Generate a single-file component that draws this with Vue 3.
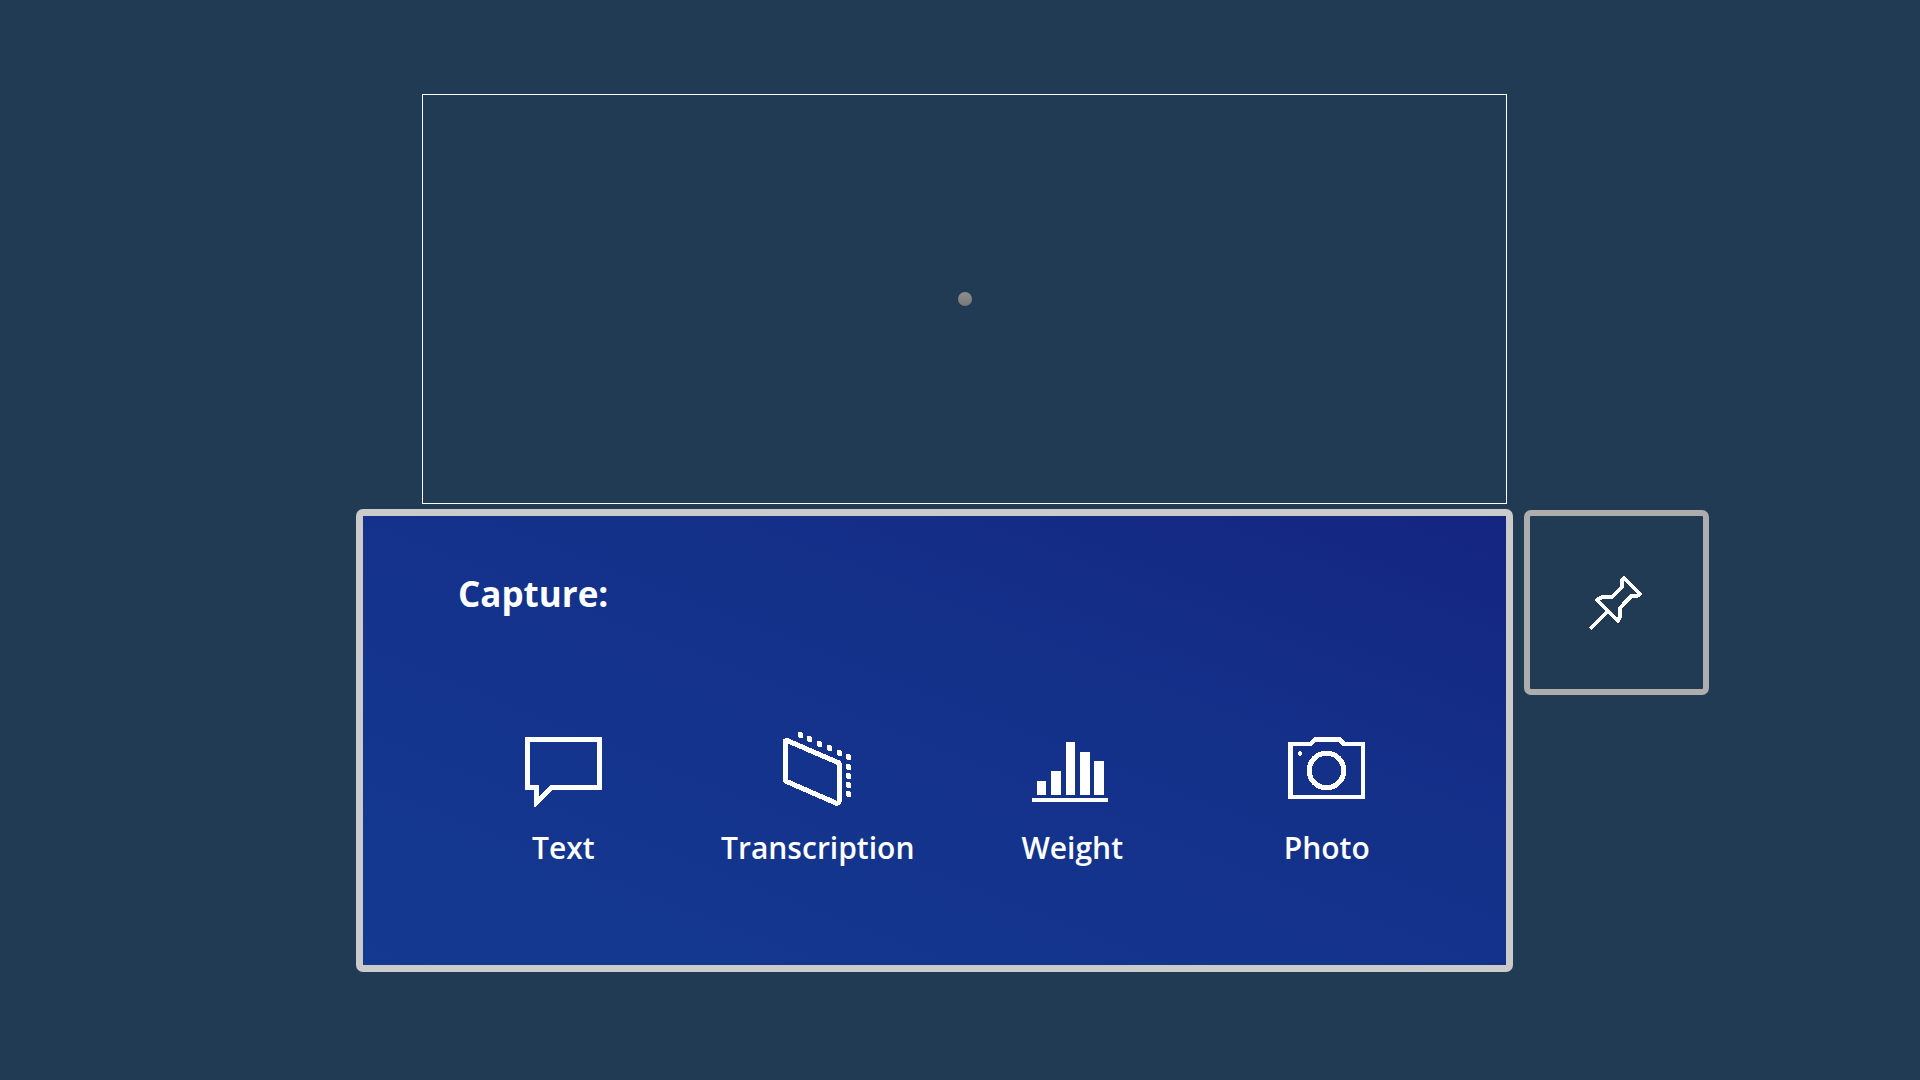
<script setup>
const ticks = [
  [20, 2], [29, 6], [39, 11], [49, 15], [59, 20], [68, 24],
  [68, 34], [68, 43], [68, 52], [68, 61],
]
const bars = [
  { x: 5, y: 51, w: 9 },
  { x: 19, y: 41, w: 10 },
  { x: 34, y: 12, w: 9 },
  { x: 48, y: 22, w: 10 },
  { x: 62, y: 31, w: 10 },
]
</script>

<template>
  <main class="stage">
    <section class="viewfinder" aria-label="Viewfinder">
      <span class="cursor"></span>
    </section>

    <section class="panel" aria-labelledby="capture-title">
      <h1 id="capture-title" class="title">Capture:</h1>
      <div class="options">
        <button type="button" class="option">
          <svg class="icon" viewBox="0 0 80 80" aria-hidden="true">
            <path fill-rule="evenodd" d="M2 7H79V60H29L12 77H11V60H2ZM7 12V55H16V66L27 55H74V12Z" />
          </svg>
          <span>Text</span>
        </button>

        <button type="button" class="option">
          <svg class="icon" viewBox="0 0 80 80" aria-hidden="true">
            <path class="line" d="M7.5 11L9 10.500L61 33V72L59 73.500L7.500 51Z" />
            <path v-for="([x, y], i) in ticks" :key="i" :d="`M${x} ${y}h3l2 1v5h-3l-2 -1z`" />
          </svg>
          <span>Transcription</span>
        </button>

        <button type="button" class="option">
          <svg class="icon" viewBox="0 0 80 80" aria-hidden="true">
            <rect v-for="bar in bars" :key="bar.x" :x="bar.x" :y="bar.y" :width="bar.w" :height="65 - bar.y" />
            <rect x="0" y="68" width="76" height="4" />
          </svg>
          <span>Weight</span>
        </button>

        <button type="button" class="option">
          <svg class="icon" viewBox="0 0 80 80" aria-hidden="true">
            <path fill-rule="evenodd" d="M1 12H22L27 7H53L58 12H78V69H1ZM6 16V65H74V16H55L51 12H28L24 16Z" />
            <circle class="line" cx="39.5" cy="40.5" r="17.300" />
            <ellipse cx="13" cy="23.500" rx="2" ry="2.500" />
          </svg>
          <span>Photo</span>
        </button>
      </div>
    </section>

    <button type="button" class="pin" aria-label="Pin">
      <svg class="pin-icon" viewBox="0 0 60 60" aria-hidden="true">
        <path d="M37 5L53 21L51 22.500H45L33 35V43L31 48L10 27L15 24H25L35 14V7ZM21 38L3 56" />
      </svg>
    </button>
  </main>
</template>

<style>
body {
  margin: 0;
  background: #223b54;
}
</style>

<style scoped>
.stage {
  box-sizing: border-box;
  display: grid;
  grid-template-columns: 356fr 1157fr 11px 185px 211fr;
  grid-template-rows: auto auto;
  row-gap: 5px;
  align-items: start;
  min-height: 100vh;
  align-content: start;
  padding: 94px 0;
  background: #223b54;
  color: #fff;
  font-family: "Open Sans", "Noto Sans", sans-serif;
}

.viewfinder {
  box-sizing: border-box;
  grid-column: 2;
  display: flex;
  align-items: center;
  justify-content: center;
  min-height: 410px;
  margin: 0 6px 0 66px;
  border: 1px solid #fff;
}

.cursor {
  width: 14px;
  height: 14px;
  border-radius: 50%;
  background: linear-gradient(#8f8f8f, #777);
}

.panel {
  box-sizing: border-box;
  grid-column: 2;
  padding: 54px 52px 97px 73px;
  border: 7px solid #cbcbcb;
  border-radius: 7px;
  background: linear-gradient(to top right, #143991, #143089 65%, #142580) padding-box;
}

.title {
  margin: 0 0 112px 22px;
  font-size: 35px;
  font-weight: 700;
  line-height: 48px;
}

.options {
  display: grid;
  grid-template-columns: repeat(4, 1fr);
}

.option {
  display: flex;
  flex-direction: column;
  align-items: center;
  gap: 18px;
  padding: 0;
  border: 0;
  background: none;
  color: #fff;
  font: inherit;
  font-size: 30px;
  font-weight: 600;
  line-height: 40px;
  cursor: pointer;
}

.icon {
  width: 80px;
  height: 80px;
  fill: #fff;
  shape-rendering: crispEdges;
}

.line {
  fill: none;
  stroke: #fff;
  stroke-width: 5px;
  stroke-linejoin: round;
}

.pin {
  box-sizing: border-box;
  grid-column: 4;
  display: flex;
  align-items: center;
  justify-content: center;
  height: 185px;
  margin-top: 1px;
  padding: 0;
  border: 6px solid #adadad;
  border-radius: 7px;
  background: none;
  cursor: pointer;
}

.pin-icon {
  width: 60px;
  height: 60px;
  fill: none;
  stroke: #fff;
  stroke-width: 4px;
  stroke-linejoin: round;
  shape-rendering: crispEdges;
}
</style>
